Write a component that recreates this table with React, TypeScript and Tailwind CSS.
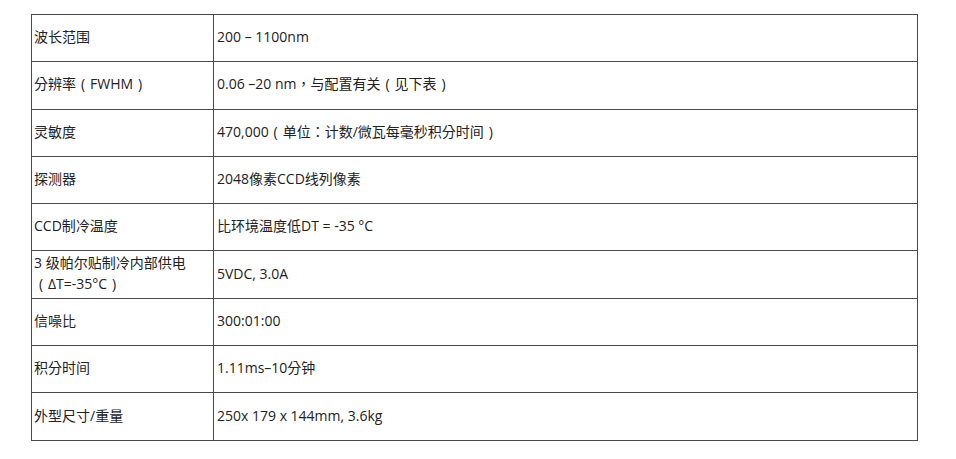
import type { ReactNode } from "react"

// full-width parens drawn centred in an em box, like the source font does
function cjk(text: string): ReactNode[] {
  return text.split(/([（）])/).map((part, i) =>
    part === "（" || part === "）" ? (
      <span key={i} className="inline-block w-[14px] text-center">
        {part === "（" ? "(" : ")"}
      </span>
    ) : (
      part
    ),
  )
}

const rows: [ReactNode, string][] = [
  ["波长范围", "200 – 1100nm"],
  [cjk("分辨率（FWHM）"), "0.06 –20 nm，与配置有关（见下表）"],
  ["灵敏度", "470,000（单位：计数/微瓦每毫秒积分时间）"],
  ["探测器", "2048像素CCD线列像素"],
  ["CCD制冷温度", "比环境温度低DT = -35 °C"],
  [
    <>
      3 级帕尔贴制冷内部供电
      <br />
      {cjk("（ΔT=-35°C）")}
    </>,
    "5VDC, 3.0A",
  ],
  ["信噪比", "300:01:00"],
  ["积分时间", "1.11ms–10分钟"],
  ["外型尺寸/重量", "250x 179 x 144mm, 3.6kg"],
]

export default function App() {
  return (
    <div
      className="w-[956px] h-[459px] bg-white pt-[14px] pl-[31px]"
      style={{ fontFamily: '"Open Sans", "Noto Sans CJK TC", sans-serif' }}
    >
      <table className="border-collapse text-[14px] text-[#222] w-[887px]">
        <tbody>
          {rows.map(([label, value], i) => (
            <tr key={i} className="h-[47.3px]">
              <td className="w-[182px] border border-[#4a4a4a] pl-[2px] pr-1 pb-[3px] align-middle leading-[21px]">
                {label}
              </td>
              <td className="border border-[#4a4a4a] pl-[3px] pb-[3px] align-middle leading-[21px]">{cjk(value)}</td>
            </tr>
          ))}
        </tbody>
      </table>
    </div>
  )
}
